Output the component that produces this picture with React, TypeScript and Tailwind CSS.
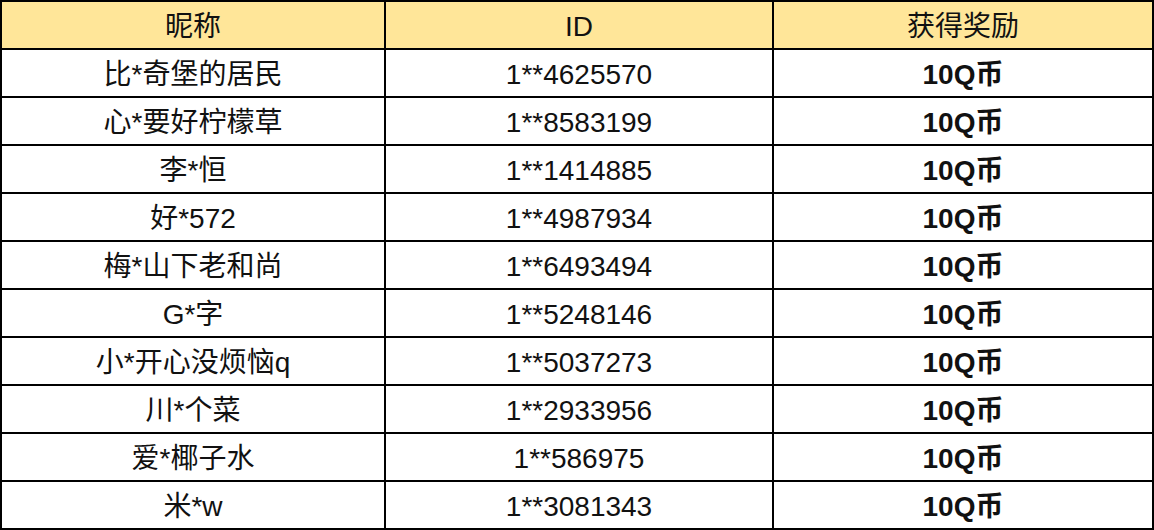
import React from "react";

const rows: [string, string][] = [
  ["比*奇堡的居民", "1**4625570"],
  ["心*要好柠檬草", "1**8583199"],
  ["李*恒", "1**1414885"],
  ["好*572", "1**4987934"],
  ["梅*山下老和尚", "1**6493494"],
  ["G*字", "1**5248146"],
  ["小*开心没烦恼q", "1**5037273"],
  ["川*个菜", "1**2933956"],
  ["爱*椰子水", "1**586975"],
  ["米*w", "1**3081343"],
];

export default function App() {
  return (
    <div
      className="w-[1154px] h-[530px] bg-black p-[2px] grid grid-cols-[382px_386px_378px] grid-rows-[repeat(11,46px)] gap-[2px] text-[28px] text-[#111]"
      style={{ fontFamily: '"Liberation Sans", "Noto Sans CJK SC", sans-serif' }}
    >
      <div className="bg-[#FFE699] flex items-center justify-center pt-[3px]">昵称</div>
      <div className="bg-[#FFE699] flex items-center justify-center pt-[3px]">ID</div>
      <div className="bg-[#FFE699] flex items-center justify-center pt-[3px]">获得奖励</div>
      {rows.map(([name, id], i) => (
        <React.Fragment key={i}>
          <div className="bg-white flex items-center justify-center pt-[3px]">{name}</div>
          <div className="bg-white flex items-center justify-center pt-[3px]">{id}</div>
          <div className="bg-white flex items-center justify-center pt-[3px] font-bold">10Q币</div>
        </React.Fragment>
      ))}
    </div>
  );
}
